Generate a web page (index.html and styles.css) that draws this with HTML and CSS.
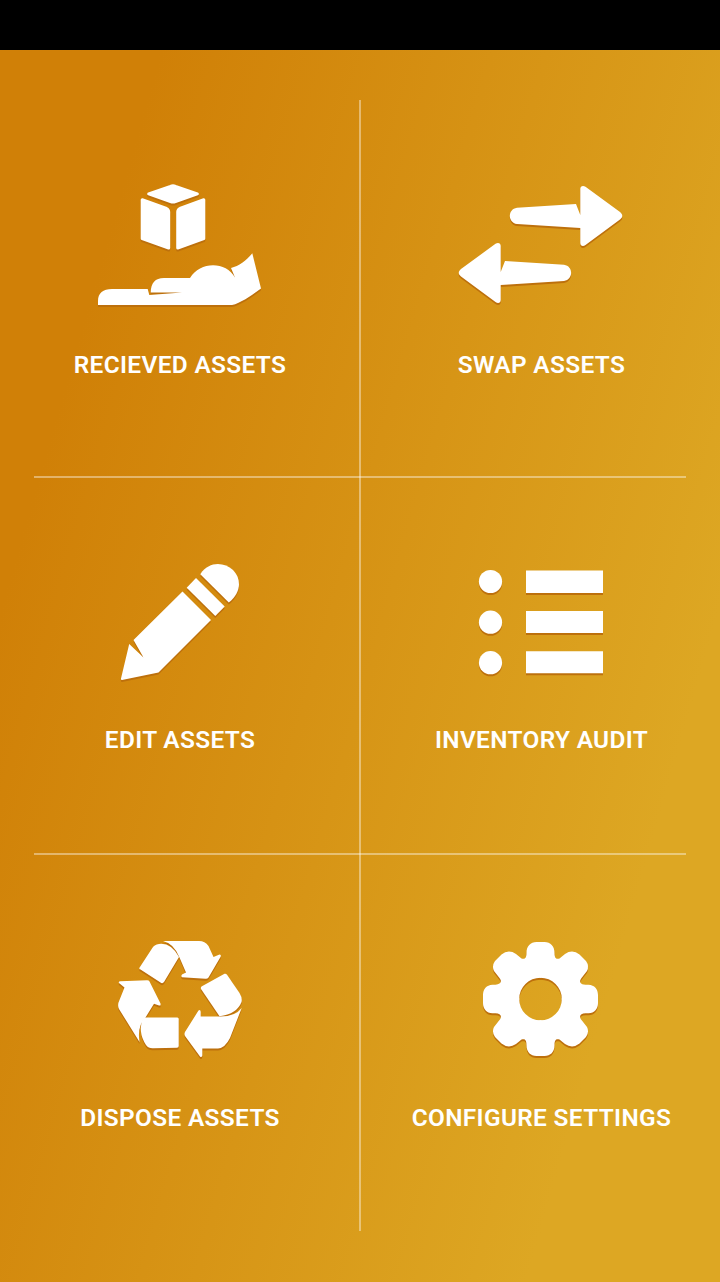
FILE: index.html
```html
<!DOCTYPE html>
<html lang="en">
<head>
<meta charset="utf-8">
<title>Assets</title>
<link rel="stylesheet" href="styles.css">
</head>
<body>
<div class="statusbar"></div>
<main class="screen">
  <nav class="menu">
    <a class="tile">
      <svg class="icon" viewBox="0 170 360 160">
        <g class="rounded">
          <path d="M148.700 193.900L170.500 186.300Q173 185.200 175.500 186.300L197.300 193.900L175.500 201.600Q173 202.500 170.500 201.600Z"/>
          <path d="M142.200 199.700L166.500 208.500Q168.700 209.500 168.700 212V248L142.200 238.500Z"/>
          <path d="M203.800 199.700L179.900 208.500Q177.700 209.500 177.700 212V248L203.800 238.500Z"/>
        </g>
        <path d="M98 305V301C98 293 103 289 112 289H147.700L149.300 295L182 292.600L150.700 292.500C151 283 155 278 164 278H190C200 261 226 261 235 277.500L231 268C239 266 246 261 252.300 253.300L261 288.500C252 295 241 303 232 305Z"/>
      </svg>
      <span class="label">RECIEVED ASSETS</span>
    </a>
    <a class="tile">
      <svg class="icon" viewBox="360 170 360 160">
        <g id="swap-arrow">
          <path d="M580.300 215L576 204L517 207.700C507.500 209 507.500 222.500 517 224L580.300 228V243C580.300 246 583 247 585.500 245L620 219.500C623 217 623 214.500 620 212L585.500 186.800C583 185 580.300 186 580.300 189Z"/>
        </g>
        <use href="#swap-arrow" transform="matrix(-1 0 0 1 1081 57)"/>
      </svg>
      <span class="label">SWAP ASSETS</span>
    </a>
    <a class="tile tile-middle">
      <svg class="icon" viewBox="0 547 360 160">
        <path d="M200.300 574.200C209 561 224 562 233 570C242 579 241 593 228.800 602.500Z"/>
        <path d="M196 578L224.700 606.500L215.300 616L186.700 587.700Z"/>
        <path d="M182.500 591.500L211 620L158.500 672.500L122 680Q120.700 680 121 678.500L129.200 644L143.500 657.500L133.500 640Z"/>
      </svg>
      <span class="label">EDIT ASSETS</span>
    </a>
    <a class="tile tile-middle">
      <svg class="icon" viewBox="360 547 360 160">
        <circle cx="490.500" cy="581.500" r="11.600"/>
        <circle cx="490.500" cy="622.200" r="11.600"/>
        <circle cx="490.500" cy="662.700" r="11.600"/>
        <path d="M526 570.500H603V593H526ZM526 611H603V633H526ZM526 651.300H603V673.300H526Z"/>
      </svg>
      <span class="label">INVENTORY AUDIT</span>
    </a>
    <a class="tile tile-bottom">
      <svg class="icon" viewBox="0 924 360 160">
        <path d="M139.300 968L152 948.500Q154 944.500 159 944Q171 942.500 179 957L164 982Q162.500 984 160.500 982.500L140.500 969.500Q139 969 139.300 968Z"/>
        <path d="M163 941H199Q205 941 208.500 946L213.500 957L219.500 954.500Q221.500 954.700 220.500 957L208.500 977.500Q207.500 979 205.500 978.800L182 977.300Q180.500 976.300 182 974.500L186 972.500L179.500 957.500Q174 943.500 163 941Z"/>
        <path d="M201.500 986.500L224.500 973.800Q226 973.300 227 974.700L239.500 993Q242.500 998 241.500 1002Q237 1014 219.500 1016.300L201 989Q200.500 987.500 201.500 986.500Z"/>
        <path d="M241.700 1008L230 1038Q225 1048 218 1048.500H202.300V1055.500Q201.500 1058 200 1056.500L185 1036Q184 1034 185 1032L198.500 1010.500Q200.500 1009 200.700 1012V1016.500H219Q235 1017 241.700 1008Z"/>
        <path d="M178.700 1018.500V1046Q178.700 1047.800 177 1047.800L153 1048.300Q148.500 1048.500 146 1045Q137 1031 143.500 1017.500H177.500Z"/>
        <path d="M119 983Q118 981.500 120.500 981.300L147 980.200Q149 980.200 149.500 981.500L160.500 1003.500Q161 1006 159 1005.500L154 1003.800L145.500 1017.500Q137 1026 139.500 1042L119 1009Q117 1005 119.500 1000L124.500 987.500Z"/>
      </svg>
      <span class="label">DISPOSE ASSETS</span>
    </a>
    <a class="tile tile-bottom">
      <svg class="icon" viewBox="360 924 360 160">
        <g transform="translate(540.500 999)">
          <path id="gear-quarter" d="M1 -57H-4C-10 -57 -14 -53 -14 -46C-14 -41 -15.500 -39.500 -19 -40.500L-24.500 -45Q-32 -50 -39 -44.500L-45.500 -38Q-49 -33 -46.500 -28L-41 -21C-38 -17 -40 -14.500 -45 -14.300H-48C-54 -14 -57.500 -10 -57.500 -4V1H-21.300V0A21.300 21.300 0 0 1 0 -21.300H1Z"/>
          <use href="#gear-quarter" transform="scale(-1 1)"/>
          <use href="#gear-quarter" transform="scale(1 -1)"/>
          <use href="#gear-quarter" transform="scale(-1 -1)"/>
        </g>
      </svg>
      <span class="label">CONFIGURE SETTINGS</span>
    </a>
    <i class="rule rule-vertical"></i>
    <i class="rule rule-upper"></i>
    <i class="rule rule-lower"></i>
  </nav>
</main>
</body>
</html>
```
FILE: styles.css
```css
* {
  box-sizing: border-box;
}

body {
  margin: 0;
  width: 720px;
  height: 1282px;
  display: flex;
  flex-direction: column;
  font-family: Roboto, "Liberation Sans", sans-serif;
}

.statusbar {
  height: 50px;
  background: #000;
}

.screen {
  flex: 1;
  padding-top: 50px;
  background: linear-gradient(106deg, #d08007 15%, #dda723 82%);
}

.menu {
  position: relative;
  display: grid;
  grid-template-columns: 360px 360px;
  grid-template-rows: repeat(3, 377px);
}

.tile {
  display: flex;
  flex-direction: column;
  align-items: center;
  padding-top: 70px;
}

.icon {
  width: 360px;
  height: 160px;
  fill: #fff;
  filter: drop-shadow(0 2px 0.4px #bd700c);
}

.rounded {
  stroke: #fff;
  stroke-width: 3px;
  stroke-linejoin: round;
}

.label {
  margin-top: 20px;
  color: #fff;
  font-size: 24.4px;
  font-weight: 650;
  line-height: 30px;
  letter-spacing: 0.35px;
  white-space: nowrap;
}

.tile:nth-child(even) .label {
  padding-left: 3px;
}

.tile-middle .label {
  margin-top: 18px;
}

.tile-bottom .label {
  margin-top: 19px;
}

.rule {
  position: absolute;
  background: rgba(255, 255, 255, 0.4);
}

.rule-vertical {
  top: 0;
  bottom: 0;
  left: 359px;
  width: 2px;
}

.rule-upper,
.rule-lower {
  left: 34px;
  right: 34px;
  height: 2px;
}

.rule-upper {
  top: 376px;
}

.rule-lower {
  top: 753px;
}
```
